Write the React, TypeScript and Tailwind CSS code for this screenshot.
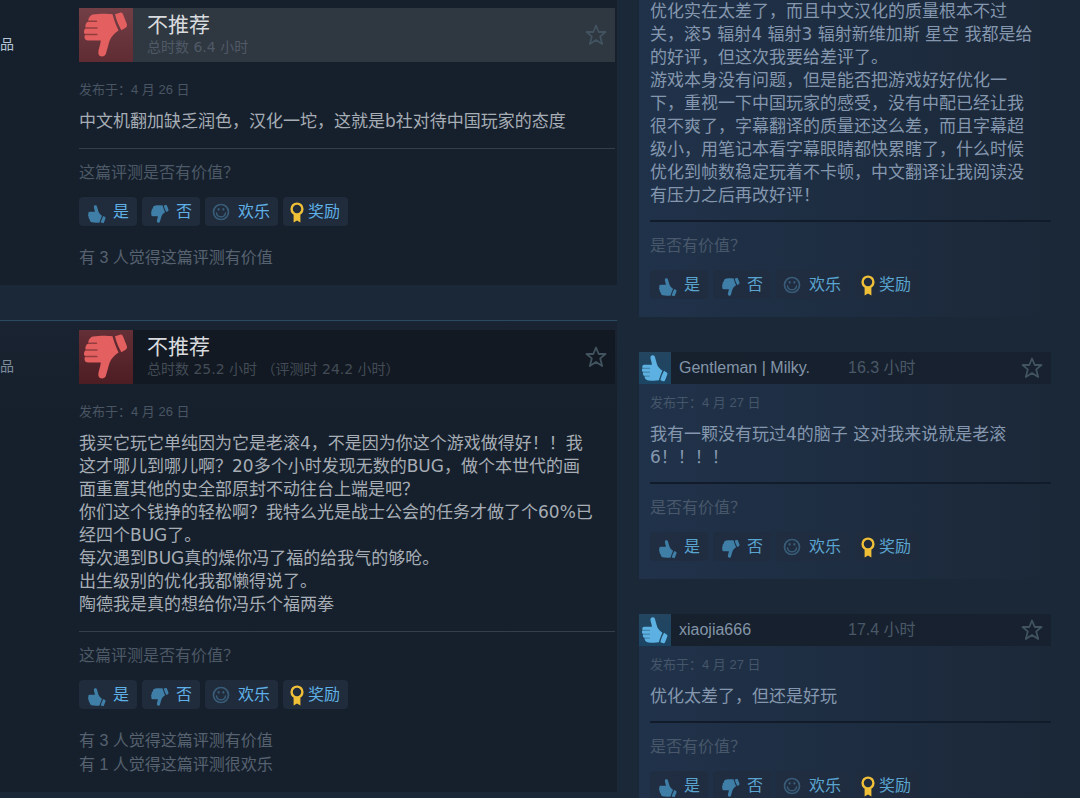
import React from 'react';

interface ThumbIconProps {
  up?: boolean;
  className?: string;
  detailed?: boolean;
}

const ThumbIcon: React.FC<ThumbIconProps> = ({ up = false, className = '', detailed = false }) => (
  <svg viewBox="0 0 54 54" className={className} fill="currentColor" aria-hidden="true">
    <g transform={up ? 'matrix(1 0 0 -1 0 54)' : undefined}>
      <path d="M14 6.5C20 5.4 28 5.4 33.5 6.2C34.5 10 36.5 16 39.5 22.5C36 25 32 28.500 30.500 33C29 38 28 42 26.800 46C25.800 49.500 19.500 49.500 19.300 45C19.300 41 21.500 37 21.800 32.500L9 32.500C6 32.500 4.800 29.500 6 26.500C4.400 25 4.600 21.500 6.800 20C5.800 17.500 7 14.500 9.200 13.500C9.200 10.500 11 7 14 6.500Z" />
      <path d="M36 6.300L41 4.700C42.500 4.300 43.500 5 44.200 6.800L47.800 16C48.400 17.800 47.800 19 46.200 20L42.300 22.200C39.500 17 37.300 12 36 6.300Z" />
      {detailed && (
        <path
          d="M9.500 13.300H17.500M7.200 20H18M6.200 26.500H18"
          fill="none"
          stroke="#000000"
          strokeOpacity="0.35"
          strokeWidth="1.400"
          strokeLinecap="round"
        />
      )}
    </g>
  </svg>
);

const SmileIcon: React.FC = () => (
  <svg viewBox="0 0 18 18" className="h-[18px] w-[18px] text-[#385c78]" fill="none" stroke="currentColor" aria-hidden="true">
    <circle cx="9" cy="9" r="7.500" strokeWidth="1.700" />
    <path d="M4.500 10C5 15 13 15 13.500 10" strokeWidth="1.500" strokeLinecap="round" />
    <ellipse cx="6.600" cy="6.300" rx="1" ry="1.400" fill="currentColor" stroke="none" />
    <ellipse cx="11.400" cy="6.300" rx="1" ry="1.400" fill="currentColor" stroke="none" />
  </svg>
);

const AwardIcon: React.FC = () => (
  <svg viewBox="0 0 14 22" className="h-[22px] w-[14px] text-[#f0bf38]" aria-hidden="true">
    <circle cx="7" cy="8" r="5.400" fill="none" stroke="currentColor" strokeWidth="2.400" />
    <path d="M3.600 13.500H10.400V21.500L7 19.500L3.600 21.500Z" fill="currentColor" />
  </svg>
);

const StarButton: React.FC = () => (
  <button type="button" aria-label="收藏" className="ml-auto mr-2 text-[#41535f]">
    <svg viewBox="0 0 22 22" className="block h-[22px] w-[22px]" fill="none" stroke="currentColor" strokeWidth="1.800" strokeLinejoin="round" aria-hidden="true">
      <path d="M11 1.500L13.700 8H20.500L15.200 12.400L17.200 20L11 15.900L4.800 20L6.800 12.400L1.500 8H8.300Z" />
    </svg>
  </button>
);

const VoteButtons: React.FC<{ muted?: boolean }> = ({ muted = false }) => {
  const button = muted
    ? 'flex h-[29px] items-center rounded-sm bg-[#212c3d]/60 pr-2 text-[#5aa5d0]'
    : 'flex h-[29px] items-center rounded-sm bg-[#202b3b] pr-2 text-[#5fb0e6]';

  return (
    <div className="mt-3 flex gap-[5px] text-[16px] leading-6">
      <button type="button" className={`${button} gap-[5px] pl-[7px]`}>
        <ThumbIcon up className="mt-1 h-[22px] w-[22px] text-[#3f7ea6]" />
        是
      </button>
      <button type="button" className={`${button} gap-[5px] pl-[7px]`}>
        <ThumbIcon className="mt-1 h-[22px] w-[22px] text-[#3f7ea6]" />
        否
      </button>
      <button type="button" className={`${button} gap-2 pl-[7px]`}>
        <SmileIcon />
        欢乐
      </button>
      <button type="button" className={`${button} gap-1 pl-[7px]`}>
        <AwardIcon />
        奖励
      </button>
    </div>
  );
};

interface Review {
  hours: string;
  date: string;
  text: string;
  feedback: string[];
  highlighted?: boolean;
}

const reviews: Review[] = [
  {
    hours: '总时数 6.4 小时',
    date: '4 月 26 日',
    text: '中文机翻加缺乏润色，汉化一坨，这就是b社对待中国玩家的态度',
    feedback: ['有 3 人觉得这篇评测有价值'],
    highlighted: true,
  },
  {
    hours: '总时数 25.2 小时 （评测时 24.2 小时）',
    date: '4 月 26 日',
    text: [
      '我买它玩它单纯因为它是老滚4，不是因为你这个游戏做得好！！我',
      '这才哪儿到哪儿啊？20多个小时发现无数的BUG，做个本世代的画',
      '面重置其他的史全部原封不动往台上端是吧？',
      '你们这个钱挣的轻松啊？我特么光是战士公会的任务才做了个60%已',
      '经四个BUG了。',
      '每次遇到BUG真的燥你冯了福的给我气的够呛。',
      '出生级别的优化我都懒得说了。',
      '陶德我是真的想给你冯乐个福两拳',
    ].join('\n'),
    feedback: ['有 3 人觉得这篇评测有价值', '有 1 人觉得这篇评测很欢乐'],
  },
];

const ReviewCard: React.FC<{ review: Review }> = ({ review }) => (
  <article
    className={
      review.highlighted
        ? 'flex bg-[#16202c] pb-[15px] pt-2'
        : 'flex border-t border-[#2a4a62] bg-linear-to-b from-[#192331] to-[#16202c] to-20% pb-[15px] pt-[9px]'
    }
  >
    <div className="w-[79px] shrink-0">
      <p className={review.highlighted ? 'mt-[26px] text-[14px] leading-5 text-[#b3c5d6]' : 'mt-[26px] text-[14px] leading-5 text-[#7c8c9c]'}>
        品
      </p>
    </div>
    <div className="min-w-0 flex-1 pr-[2px]">
      <header className={review.highlighted ? 'flex items-center bg-[#2f3741]' : 'flex items-center bg-[#121922]'}>
        <div
          className={
            review.highlighted
              ? 'h-[54px] w-[54px] shrink-0 bg-linear-to-b from-[#733f47] to-[#602c33] text-[#e35f60]'
              : 'h-[54px] w-[54px] shrink-0 bg-linear-to-b from-[#642f36] to-[#4c1d23] text-[#e35f60]'
          }
        >
          <ThumbIcon detailed className="h-[54px] w-[54px]" />
        </div>
        <div className="ml-[14px] font-['DejaVu_Sans','Noto_Sans_CJK_SC',sans-serif]">
          <h2 className="text-[21px] leading-6 text-[#d9dcde]">不推荐</h2>
          <p className={review.highlighted ? 'text-[14px] leading-5 text-[#4f5a66]' : 'text-[14px] leading-5 text-[#434c56]'}>{review.hours}</p>
        </div>
        <StarButton />
      </header>
      <p className="mt-[18px] text-[13px] leading-5 text-[#495563]">发布于：{review.date}</p>
      <p className="mt-[10px] whitespace-pre-line font-['DejaVu_Sans','Noto_Sans_CJK_SC',sans-serif] text-[17px] leading-[23px] text-[#a6adb5]">
        {review.text}
      </p>
      <hr className="mt-[15px] border-t border-[#343d48]" />
      <p className="mt-3 text-[16px] leading-6 text-[#4d5966]">这篇评测是否有价值？</p>
      <VoteButtons />
      <div className="mt-5 text-[16px] leading-6 text-[#566270]">
        {review.feedback.map((line) => (
          <p key={line}>{line}</p>
        ))}
      </div>
    </div>
  </article>
);

interface RecentReview {
  name?: string;
  hours?: string;
  date?: string;
  text: string;
}

const recentReviews: RecentReview[] = [
  {
    text: [
      '优化实在太差了，而且中文汉化的质量根本不过',
      '关，滚5 辐射4 辐射3 辐射新维加斯 星空 我都是给',
      '的好评，但这次我要给差评了。',
      '游戏本身没有问题，但是能否把游戏好好优化一',
      '下，重视一下中国玩家的感受，没有中配已经让我',
      '很不爽了，字幕翻译的质量还这么差，而且字幕超',
      '级小，用笔记本看字幕眼睛都快累瞎了，什么时候',
      '优化到帧数稳定玩着不卡顿，中文翻译让我阅读没',
      '有压力之后再改好评！',
    ].join('\n'),
  },
  {
    name: 'Gentleman | Milky.',
    hours: '16.3 小时',
    date: '4 月 27 日',
    text: '我有一颗没有玩过4的脑子 这对我来说就是老滚\n6！！！！',
  },
  {
    name: 'xiaojia666',
    hours: '17.4 小时',
    date: '4 月 27 日',
    text: '优化太差了，但还是好玩',
  },
];

const RecentReviewCard: React.FC<{ review: RecentReview }> = ({ review }) => (
  <article className="bg-linear-to-r from-[#20324a] to-[#1b2838] pb-[18px]">
    {review.name && (
      <header className="mb-[9px] flex h-8 items-center bg-linear-to-r from-[#17202d] to-[#17212f]">
        <div className="h-8 w-8 shrink-0 bg-linear-to-b from-[#234560] to-[#1c4563] text-[#5cb0e2]">
          <ThumbIcon up detailed className="h-8 w-8" />
        </div>
        <a href="#" className="ml-2 w-[169px] truncate text-[16px] leading-6 text-[#8395a8]">
          {review.name}
        </a>
        <span className="text-[16px] leading-6 text-[#4a5866]">{review.hours}</span>
        <StarButton />
      </header>
    )}
    <div className="pl-[11px]">
      {review.date && <p className="mb-[10px] text-[13px] leading-5 text-[#45566a]">发布于：{review.date}</p>}
      <p className="whitespace-pre-line font-['DejaVu_Sans','Noto_Sans_CJK_SC',sans-serif] text-[17px] leading-[23px] text-[#8497ae]">
        {review.text}
      </p>
      <hr className="mt-[13px] border-t-2 border-[#121b29]" />
      <p className="mt-3 text-[16px] leading-6 text-[#48586a]">是否有价值？</p>
      <VoteButtons muted />
    </div>
  </article>
);

const App: React.FC = () => (
  <main
    lang="zh-CN"
    className="grid h-screen grid-cols-[617fr_463fr] overflow-hidden bg-[#1b2838] font-['Liberation_Sans','Noto_Sans_CJK_SC',sans-serif]"
  >
    <section className="flex flex-col gap-[35px]">
      {reviews.map((review) => (
        <ReviewCard key={review.hours} review={review} />
      ))}
    </section>
    <section className="flex flex-col gap-[35px] pl-[22px] pr-[29px]">
      {recentReviews.map((review) => (
        <RecentReviewCard key={review.text} review={review} />
      ))}
    </section>
  </main>
);

export default App;
